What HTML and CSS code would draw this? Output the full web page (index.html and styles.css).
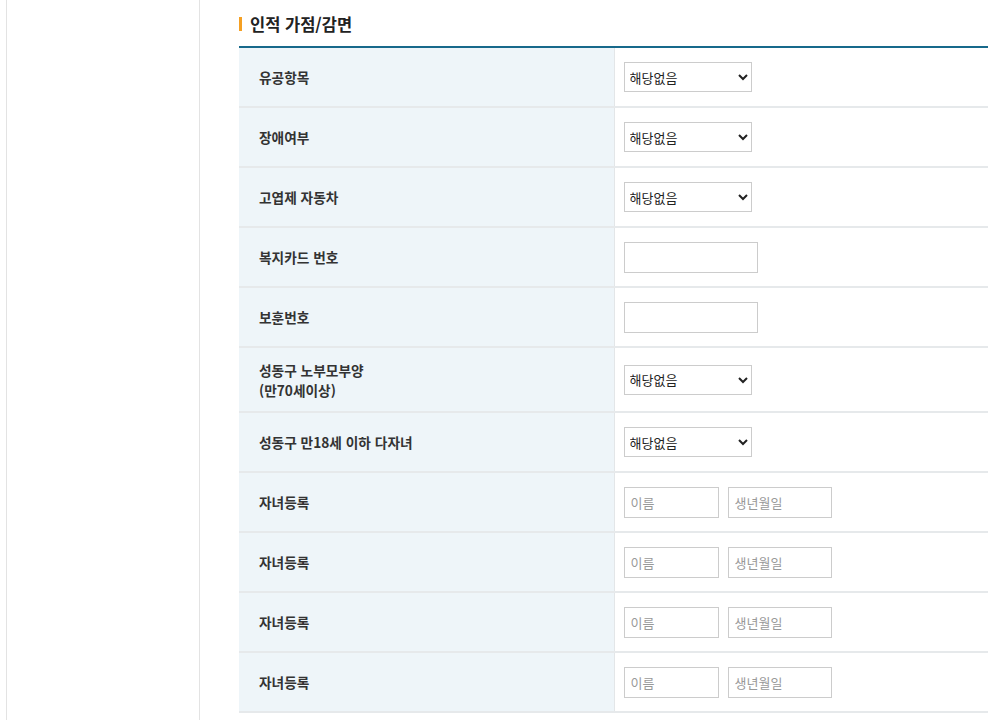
FILE: index.html
```html
<!DOCTYPE html>
<html lang="ko">
  <head>
    <meta charset="UTF-8" />
    <meta name="viewport" content="width=device-width, initial-scale=1.0" />
    <title>인적 가점/감면</title>
    <link rel="stylesheet" href="styles.css">
  </head>
  <body>
    <div class="wrap">
      <div class="side"></div>
      <div class="content">
        <h3 class="tit">인적 가점/감면</h3>
        <table class="form">
          <tr>
            <th>유공항목</th>
            <td><select><option>해당없음</option></select></td>
          </tr>
          <tr>
            <th>장애여부</th>
            <td><select><option>해당없음</option></select></td>
          </tr>
          <tr>
            <th>고엽제 자동차</th>
            <td><select><option>해당없음</option></select></td>
          </tr>
          <tr>
            <th>복지카드 번호</th>
            <td><input type="text" class="txt" /></td>
          </tr>
          <tr>
            <th>보훈번호</th>
            <td><input type="text" class="txt" /></td>
          </tr>
          <tr class="tall">
            <th>성동구 노부모부양<br />(만70세이상)</th>
            <td><select><option>해당없음</option></select></td>
          </tr>
          <tr>
            <th>성동구 만18세 이하 다자녀</th>
            <td><select><option>해당없음</option></select></td>
          </tr>
          <tr>
            <th>자녀등록</th>
            <td><input type="text" class="name" placeholder="이름" /><input type="text" class="birth" placeholder="생년월일" /></td>
          </tr>
          <tr>
            <th>자녀등록</th>
            <td><input type="text" class="name" placeholder="이름" /><input type="text" class="birth" placeholder="생년월일" /></td>
          </tr>
          <tr>
            <th>자녀등록</th>
            <td><input type="text" class="name" placeholder="이름" /><input type="text" class="birth" placeholder="생년월일" /></td>
          </tr>
          <tr>
            <th>자녀등록</th>
            <td><input type="text" class="name" placeholder="이름" /><input type="text" class="birth" placeholder="생년월일" /></td>
          </tr>
        </table>
      </div>
    </div>
  </body>
</html>
```

FILE: styles.css
```css
* {
  margin: 0;
  padding: 0;
  box-sizing: border-box;
}
html,
body {
  width: 100%;
  height: 100%;
  background: #fff;
  font-family: "Noto Sans CJK KR", "Noto Sans", sans-serif;
  color: #333;
}
.wrap {
  display: flex;
  align-items: stretch;
  min-height: 100%;
  padding-left: 6px;
}
.side {
  width: 194px;
  flex: none;
  border-left: 1px solid #e3e3e3;
  border-right: 1px solid #e3e3e3;
}
.content {
  width: 749px;
  margin-left: 39px;
  padding-top: 12px;
}
.tit {
  font-size: 16.5px;
  font-weight: bold;
  line-height: 24px;
  padding-left: 11px;
  position: relative;
  margin-bottom: 10px;
  color: #222;
}
.tit::before {
  content: "";
  position: absolute;
  left: 0;
  top: 5px;
  width: 3px;
  height: 14px;
  background: #f5a023;
}
.form {
  width: 100%;
  border-collapse: collapse;
  border-top: 2px solid #17698b;
}
.form tr {
  height: 60px;
  border-bottom: 2px solid #e6e9eb;
}
.form tr.tall {
  height: 65px;
}
.form th {
  width: 375px;
  background: #eef5f9;
  text-align: left;
  font-size: 13.7px;
  font-weight: bold;
  line-height: 20px;
  padding: 0 20px;
  border-right: 1px solid #e3e6e8;
  color: #333;
}
.form td {
  padding: 0 9px;
  font-size: 13px;
}
.form select {
  width: 128px;
  height: 30px;
  border: 1px solid #ccc;
  font-family: inherit;
  font-size: 13px;
  color: #222;
  padding-left: 1px;
  background: #fff;
}
.form input {
  height: 31px;
  border: 1px solid #ccc;
  font-family: inherit;
  font-size: 13px;
  padding: 0 6px;
  color: #333;
  vertical-align: middle;
}
.form input::placeholder {
  color: #999;
}
.form .txt {
  width: 134px;
}
.form .name {
  width: 95px;
  margin-right: 9px;
}
.form .birth {
  width: 104px;
}
```
